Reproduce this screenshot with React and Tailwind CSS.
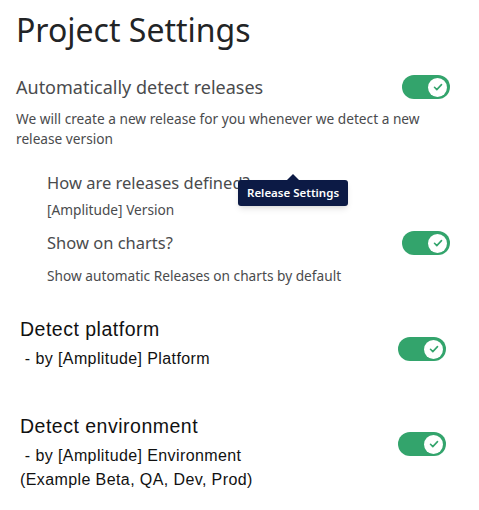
import React from "react";

function Toggle({ className = "" }) {
  return (
    <div className={`w-[48px] h-[24px] rounded-full bg-[#33a46c] flex items-center justify-end pr-[3px] shrink-0 ${className}`}>
      <div className="w-[19px] h-[19px] rounded-full bg-white flex items-center justify-center">
        <svg width="12" height="12" viewBox="0 0 12 12" fill="none">
          <path d="M2.5 6.3l2.3 2.3 4.7-5" stroke="#33a46c" strokeWidth="1.6" strokeLinecap="round" strokeLinejoin="round" />
        </svg>
      </div>
    </div>
  );
}

export default function App() {
  return (
    <div className="w-[479px] h-[510px] bg-white overflow-hidden font-['Noto_Sans',sans-serif]">
      {/* Release settings */}
      <div className="pl-[16px] pr-[29px] pt-[10px]">
        <h1 className="text-[32px] leading-[40px] text-[#222426]">Project Settings</h1>

        <div className="flex items-center justify-between mt-[25px]">
          <span className="text-[18px] leading-[24px] text-[#4a4b4d]">Automatically detect releases</span>
          <Toggle />
        </div>
        <p className="text-[13.7px] leading-[20px] text-[#4a4b4d] mt-[10px] max-w-[420px]">
          We will create a new release for you whenever we detect a new release version
        </p>

        <div className="pl-[31px] mt-[22px] relative">
          <div className="text-[16.5px] leading-[24px] text-[#4a4b4d]">How are releases defined?</div>
          <div className="text-[13.7px] leading-[20px] text-[#4a4b4d] mt-[5px]">[Amplitude] Version</div>

          {/* tooltip */}
          <div className="absolute left-[222px] top-[9px] bg-[#0c1a45] text-white text-[11.5px] font-semibold leading-[16px] px-[9px] py-[5px] rounded-[3px] shadow-md whitespace-nowrap">
            <div className="absolute left-1/2 -translate-x-1/2 -top-[6px] w-0 h-0 border-l-[6px] border-r-[6px] border-b-[6px] border-l-transparent border-r-transparent border-b-[#0c1a45]" />
            Release Settings
          </div>

          <div className="flex items-center justify-between mt-[11px]">
            <span className="text-[16.5px] leading-[24px] text-[#4a4b4d]">Show on charts?</span>
            <Toggle />
          </div>
          <p className="text-[13.7px] leading-[20px] text-[#4a4b4d] mt-[11px]">Show automatic Releases on charts by default</p>
        </div>
      </div>

      {/* Detection */}
      <div className="pl-[20px] pr-[33px] mt-[30px] font-['Liberation_Sans',Arial,sans-serif] text-[#111]">
        <div className="flex items-start justify-between">
          <div>
            <div className="text-[19.5px] leading-[26px] tracking-[0.5px]">Detect platform</div>
            <div className="text-[16px] leading-[24px] tracking-[0.4px] mt-[5px]">&nbsp;- by [Amplitude] Platform</div>
          </div>
          <Toggle className="mt-[21px]" />
        </div>

        <div className="flex items-start justify-between mt-[42px]">
          <div>
            <div className="text-[19.5px] leading-[26px] tracking-[0.5px]">Detect environment</div>
            <div className="text-[16px] leading-[24px] tracking-[0.4px] mt-[5px]">&nbsp;- by [Amplitude] Environment</div>
            <div className="text-[16px] leading-[24px] tracking-[0.4px]">(Example Beta, QA, Dev, Prod)</div>
          </div>
          <Toggle className="mt-[19px]" />
        </div>
      </div>
    </div>
  );
}
